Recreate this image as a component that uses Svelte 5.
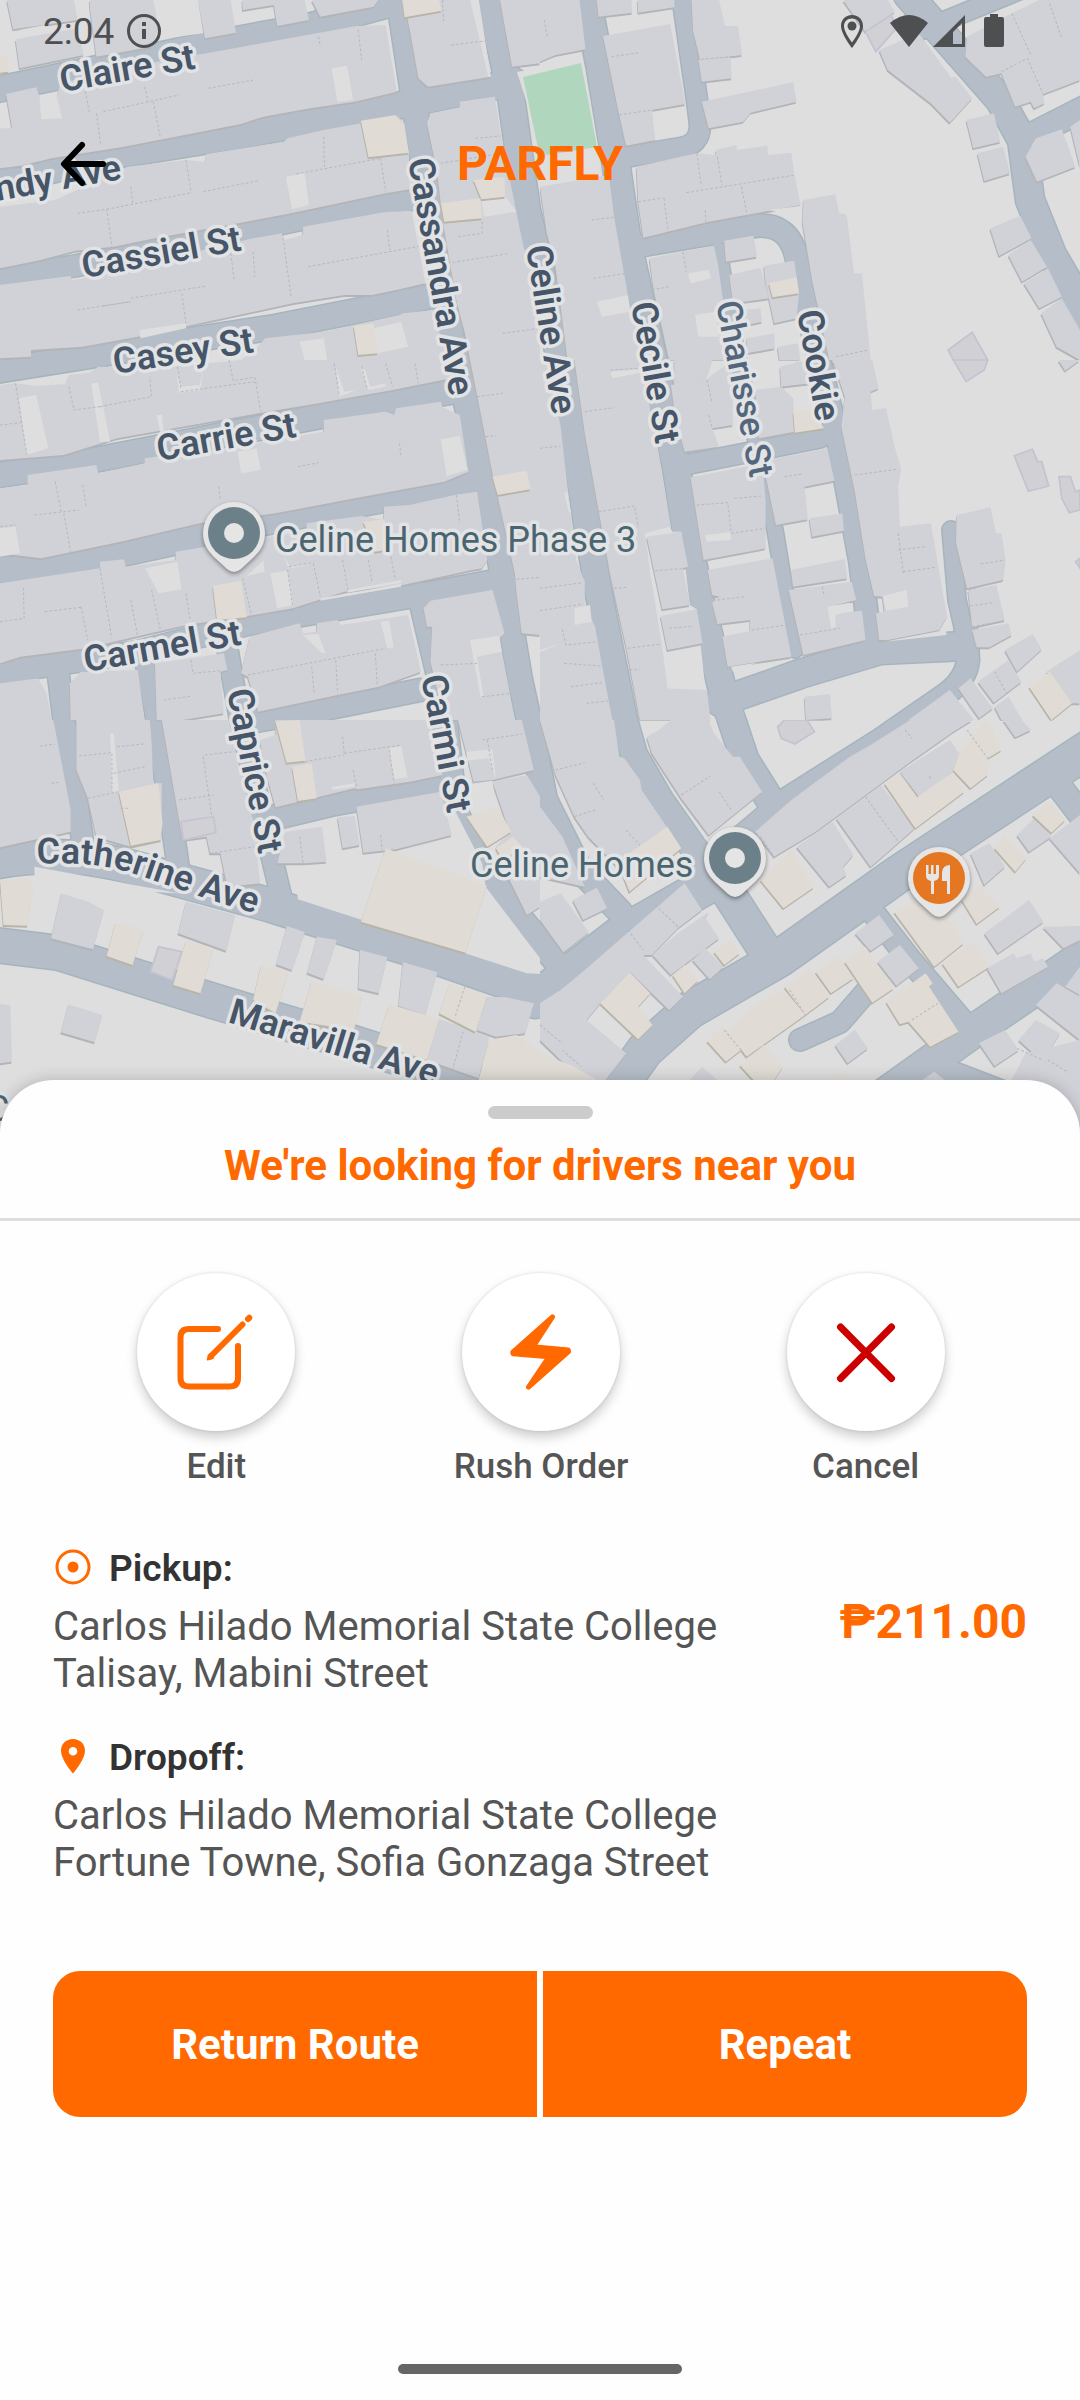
<script>
  // Street centre lines: [path, width]
  const roads = [
    ['M-5 90L100 68L207 45L310 26L405 0', 25],
    ['M-5 184L103 157L241 135L396 106L515 82', 26],
    ['M-5 278L75 266L241 232L380 203L410 200', 21],
    ['M-5 371L140 348L275 327L427 297', 24],
    ['M-5 476L100 459L300 420L455 391', 24],
    ['M-5 571L124 553L276 520L448 487L480 480', 25],
    ['M-5 673L138 652L248 624L403 598L500 580', 22],
    ['M250 722L330 708L420 690', 22],
    ['M255 822L330 804L440 784', 24],
    ['M398 -5L414 100L425 180L448 320L472 430L500 560L520 680L531 730L545 800L580 870L620 912', 24],
    ['M489 -5L510 90L527 210L556 340L573 430L588 530L600 600L624 720L634 755L660 800L695 850L720 885', 26],
    ['M586 -5L600 66L614 150L627 240L640 300L662 400L676 465L686 530L700 600L725 700L745 760L770 800', 27],
    ['M682 -5L697 100L700 125Q700 145 680 148L620 158', 20],
    ['M632 247L755 226Q790 222 797 260L805 300L838 440L860 560L870 640', 22],
    ['M719 250L730 320L775 530L795 650', 15],
    ['M685 465L820 438', 19],
    ['M720 702L800 674L880 650L965 646', 28],
    ['M951 530L957 600L966 640', 17],
    ['M966 630L968 660Q966 680 945 695L880 740L785 800L735 842', 22],
    ['M908 -5L1000 100L1022 140L1030 200L1052 255L1090 320', 28],
    ['M1022 140L1085 108', 24],
    ['M922 30L1025 -12', 18],
    ['M1090 748L900 873L780 958L690 1010L645 1050L620 1085', 36],
    ['M720 880L770 958', 32],
    ['M720 878L620 935L535 1000', 36],
    ['M-5 862Q60 850 120 864L270 905L420 952L530 990L570 990', 33],
    ['M-5 945L60 953L210 1000L350 1042L500 1090', 34],
    ['M58 672L64 720L84 850', 21],
    ['M146 662L156 715L178 865', 21],
    ['M228 652L240 720L270 850L282 900', 20],
    ['M420 595L440 680L455 810L475 855L515 912L560 966', 24],
    ['M1085 955L975 1030L880 1098', 32],
    ['M875 915L910 960L970 1030', 22],
    ['M940 1068L1010 1095', 22],
    ['M800 1040L840 1022L866 992', 21],
    ['M1062 790L1085 820', 24]
  ];

  // Map tiles; every tile is 1568 units wide and covers half of the map's width.
  const tiles = [
    {
      x: 0, y: 0,
      b: ['20,0 215,0 225,60 38,88', '45,118 225,85 243,165 57,205', '260,0 445,0 460,80 440,140 280,170 262,30', '575,0 670,0 685,98 595,115', '703,0 885,0 897,60 805,78 795,15 705,30', '905,0 1098,0 1085,20 930,50',
        '480,180 600,160 760,130 1035,78 1120,75 1152,275 1030,305 900,325 765,350 700,372 360,440 150,475 60,497 0,505 0,385 35,385 18,282 105,262 115,290 165,290 175,250',
        '1172,0 1390,0 1425,230 1243,260 1215,235 1190,90', '1250,340 1335,322 1335,305 1437,290 1455,410 1500,640 1520,740 1568,900 1568,1080 1365,1080 1350,1000 1325,900 1285,660 1270,520 1240,370', '1452,0 1568,0 1568,190 1487,200',
        '370,500 540,480 595,485 600,462 825,425 835,415 940,390 1050,370 1150,345 1175,370 1187,460 1190,568 1120,580 845,640 700,668 450,715 330,740 220,752 118,780 0,805 0,620 160,600',
        '0,855 205,828 210,840 230,838 735,715 820,700 825,720 880,705 880,680 1115,637 1195,632 1235,850 1150,870 1080,885 1000,885 850,910 580,970 400,1010 240,1040 90,1050 90,1070 0,1075',
        '770,1015 940,995 1160,945 1170,940 1260,930 1295,1080 700,1080 740,1050'],
      l: ['488,0 575,0 590,100 505,112', '55,90 130,75 135,100 62,112', '115,290 165,290 180,355 120,358', '963,205 1008,197 1025,300 980,305', '1398,600 1470,592 1500,635 1405,650', '830,530 885,520 897,615 848,628', '1365,0 1390,0 1425,230 1418,230', '870,1025 940,1015 950,1080 885,1080', '1085,985 1165,965 1185,1040 1097,1060', '405,990 540,970 540,985 408,1015'],
      t: ['1168,0 1275,0 1282,32 1175,52', '0,165 20,165 26,215 0,218', '1375,540 1465,530 1467,590 1398,598', '1280,610 1395,595 1400,655 1290,665', '1048,362 1145,346 1172,372 1187,458 1070,472', '1027,978 1085,970 1097,1060 1040,1065'],
      s: ['925,110 930,140', '1040,90 1050,180', '245,260 260,340', '445,305 465,410', '280,340 292,430', '420,260 430,305', '300,335 520,285', '225,640 310,628 325,740', '310,628 555,578', '540,480 555,578', '940,410 942,500', '860,522 1105,475', '1105,475 1120,575', '380,560 385,610', '590,575 750,542', '820,700 845,890', '895,800 1235,735', '1125,690 1132,750', '225,930 380,905', '380,895 600,858', '528,880 540,970', '670,760 680,840', '735,755 740,830', '1310,135 1430,120', '1280,490 1455,460', '1380,415 1455,408', '1300,790 1480,760', '1330,710 1400,700 1400,665', '1460,1000 1568,985', '605,265 735,240', '300,918 380,905', '1285,0 1288,70']
    },
    {
      x: 540, y: 0,
      b: ['0,0 115,0 132,148 45,165 0,185', '165,0 265,0 268,38 170,50', '283,0 390,0 390,22 285,38', '183,108 378,72 422,312 325,330 335,420 250,437 230,345', '440,0 520,0 537,78 575,78 587,165 465,180 445,95', '460,180 553,170 557,235 470,245', '470,305 735,247 745,305 612,338 590,365 490,385',
        '280,500 455,460 510,465 510,450 570,435 572,450 660,437 662,465 730,458 738,520 757,615 490,665 300,713 285,605', '765,600 858,583 868,640 890,643 912,820 935,820 960,1080 840,1080 790,840 762,665',
        '0,560 200,525 215,650 255,885 265,950 340,1080 80,1080 45,800 20,700', '318,775 505,737 517,795 530,890 545,1000 580,1080 375,1080 330,870', '535,722 620,707 630,770 540,785', '550,825 640,803 665,895 560,910', '650,797 738,782 752,880 745,955 680,970 655,850', '590,930 640,925 645,965 600,975', '600,1015 680,1000 682,1045 600,1060', '690,1040 750,1030 755,1080 695,1080',
        '880,0 1010,0 1030,35 945,95', '985,150 1100,100 1195,235 1205,228 1255,295 1190,368 1135,310 1010,210', '1370,40 1450,0 1568,0 1568,240 1460,283 1465,310 1435,325 1425,305 1380,320 1340,220 1295,230 1235,170 1240,110', '1238,360 1318,340 1337,425 1258,445', '1270,460 1345,440 1365,520 1290,543', '1410,470 1440,415 1515,388 1555,500 1443,545', '1540,380 1568,360 1568,500', '1307,685 1395,647 1427,715 1333,768', '1360,765 1425,720 1472,800 1400,845', '1405,850 1475,805 1515,890 1450,925', '1455,940 1515,895 1568,990 1568,1080 1500,1040'],
      l: ['165,905 255,885 262,935 180,950', '430,820 490,810 497,835 437,850', '450,945 510,935 520,1010 460,1010', '630,735 680,735 710,782 640,800 630,770', '665,630 755,618 760,670 700,640'],
      t: ['665,850 745,832 752,880 675,892'],
      o: ['945,95 1020,45 1035,85 975,155', '1185,1050 1255,997 1300,1080 1200,1080'],
      s: ['208,170 290,158', '230,345 325,330', '455,460 468,555', '425,578 740,525', '515,470 528,555', '360,595 372,695', '585,560 600,640', '480,630 482,670', '285,605 358,593', '150,660 215,652', '155,835 250,820', '415,755 425,815', '325,870 375,860', '1480,10 1515,115', '1370,40 1425,165', '1340,215 1415,175 1460,280', '440,180 560,170', '860,1070 955,1050', '12,60 22,115']
    },
    {
      x: 0, y: 360,
      b: ['0,75 45,70 110,78 190,72 200,45 260,38 285,20 500,20 700,0 1280,0 1310,55 1140,90 925,130 750,160 340,235 185,285 0,300',
        '80,345 280,315 285,340 420,310 420,295 690,260 940,215 940,180 1120,155 1145,165 1150,145 1280,125 1285,142 1335,165 1360,335 1290,365 1030,415 800,460 580,490 350,545 120,595 0,580 0,385 80,375',
        '0,670 290,625 290,605 360,598 365,620 510,600 510,575 780,530 890,515 890,490 1050,468 1115,480 1115,440 1190,435 1320,405 1385,395 1415,600 1400,625 1370,630 1170,675 1000,695 850,745 720,768 540,795 250,865 60,890 0,910',
        '0,970 110,955 135,1000 150,1080 0,1080', '235,935 400,930 420,1080 205,1080 203,970', '450,910 650,880 660,930 640,935 650,1060 530,1080 455,1080', '725,830 870,790 880,820 920,815 920,790 980,780 990,795 1185,765 1222,935 1100,980 980,1005 750,1055 720,950 700,940', '1230,745 1250,722 1430,690 1465,820 1450,835 1495,1080 1290,1080 1250,905 1255,800 1240,800', '1365,0 1568,0 1568,825 1515,820 1500,700 1495,640 1430,340'],
      l: ['55,115 105,105 140,265 78,285', '265,70 285,68 320,245 290,245', '1280,238 1335,228 1358,330 1297,348', '690,275 745,265 757,330 700,340', '0,505 45,500 58,580 0,590', '422,625 515,605 527,688 460,700', '785,640 835,632 852,735 805,745', '1365,840 1450,828 1457,875 1385,890 1404,1010 1395,1010', '880,825 925,822 945,880 935,880', '1105,785 1130,782 1143,862 1125,865', '512,30 525,80 580,75 590,30 582,90 520,98', '975,20 1000,95 1035,90 985,110', '1045,20 1060,30 1075,80 1120,70 1120,80 1070,90', '455,165 465,215 475,215 470,165', '1010,690 1165,660 1165,668 1010,698', '930,715 1165,672 1165,680 930,722', '735,630 765,600 768,635 715,648', '825,590 835,620 915,610 845,625'],
      t: ['618,678 700,662 717,772 630,780', '1055,485 1117,478 1120,570 1090,575', '1430,350 1530,332 1540,388 1445,405'],
      s: ['45,70 78,285', '200,80 215,150 290,140', '290,140 440,110 435,50', '515,20 525,85', '525,95 740,65', '665,0 677,62 740,52', '740,52 757,155', '0,195 60,188', '160,365 178,455', '100,465 230,450', '240,375 250,440', '185,460 205,575', '290,625 325,835', '380,720 400,830', '235,740 255,840', '440,690 468,820', '540,700 552,780', '0,785 70,775 68,680', '130,755 235,742', '705,655 730,765', '835,630 850,740', '910,610 930,710', '995,600 1010,690', '1070,600 1080,665', '1135,590 1148,660', '1325,405 1335,490', '720,945 1120,865', '975,900 980,1000', '1090,880 1095,975', '905,920 912,1000', '475,1020 560,1008', '555,900 560,940 640,932', '1280,915 1385,910', '1400,1010 1490,1000', '1385,110 1460,100', '1410,230 1440,227', '1500,658 1568,652', '0,500 45,495', '1160,250 1165,290', '865,320 925,308', '840,620 910,608', '635,380 640,420', '970,10 985,105', '1050,20 1065,85', '1120,10 1140,80', '1205,10 1215,70']
    },
    {
      x: 540, y: 360,
      b: ['100,0 300,0 320,150 345,280 380,500 320,530 350,750 355,860 370,985 485,990 495,1080 290,1080 250,860 205,650 170,450 130,220', '0,0 20,0 60,200 80,380 105,600 130,665 130,735 160,800 180,915 210,1080 0,1080',
        '380,75 480,60 560,0 560,195 500,205 520,260 420,275 395,180', '390,0 500,0 480,60 390,80', '625,90 700,80 735,115 740,215 635,235', '697,20 770,0 785,70 700,80',
        '850,0 965,0 983,85 960,95 965,150 1005,145 1030,260 1048,325 1040,380 1045,500 1135,490 1157,620 1182,770 1160,810 1010,840 985,840 975,760 1000,755 995,710 970,708 945,595 915,400 875,200 885,110',
        '437,352 500,340 645,310 655,420 655,565 475,600', '655,345 665,300 835,265 855,362 768,380 778,478 685,495', '782,475 878,460 882,512 790,530', '487,630 675,595 730,890 545,920 530,830 610,812 610,780 515,792 500,730 520,710 500,705', '728,630 885,597 892,655 735,680', '722,690 905,665 918,720 860,735 860,760 935,752 945,840 765,885',
        '1210,465 1308,442 1325,520 1340,520 1352,600 1345,660 1240,685 1208,550', '1243,690 1325,675 1350,780 1255,802', '1255,810 1360,790 1370,825 1305,862 1268,862', '1350,870 1430,822 1457,868 1385,935', '1272,965 1360,900 1398,965 1318,1028', '1215,985 1250,955 1315,1045 1275,1075', '1070,1080 1190,990 1260,1080', '1320,1040 1360,1010 1400,1080 1340,1080', '1470,935 1568,870 1568,1030 1545,1030', '768,1010 842,1002 848,1075 772,1080', '1505,0 1568,0 1525,32'],
      l: ['305,520 378,500 384,515 410,515 435,735 455,748 480,985 378,985 355,860 320,640', '480,525 552,517 555,540 485,545', '995,708 1065,690 1070,740 1005,752', '835,740 900,728 905,752 858,765 858,800 845,805', '70,400 80,395 92,470 82,450', '100,745 145,735 150,785 100,795', '0,870 60,850 0,877', '555,920 630,908 560,935', '205,35 290,28 290,38 210,55', '1000,845 1165,812 1180,800 1180,825'],
      b2: ['310,530 410,515 430,620 415,625 435,735 355,748', '350,768 455,748 472,850 370,870'],
      t: ['735,155 790,145 825,205 740,218', '1420,980 1480,935 1545,1030 1485,1080'],
      o: ['1377,287 1430,268 1445,305 1457,305 1477,378 1418,394', '1507,350 1540,350 1555,395 1568,390 1568,450 1537,458 1515,415', '1200,0 1300,0 1290,30 1237,65', '1555,605 1568,595 1568,625'],
      s: ['170,455 275,438 285,500', '205,30 285,25', '130,155 215,143', '0,265 60,258', '485,60 500,130', '490,165 500,205', '455,435 545,428 555,515', '565,415 645,408', '655,360 680,490', '710,350 760,342', '555,520 655,505', '915,345 1035,328', '1040,520 1055,640', '1040,570 1120,560', '1055,635 1150,622', '335,632 420,625', '375,805 445,798', '515,720 595,710', '615,810 715,795', '755,825 870,805', '820,680 825,710', '1280,612 1350,600', '1250,738 1320,728', '1320,935 1355,1000', '0,685 125,668', '0,752 125,732', '65,808 75,855 165,845', '70,910 180,918', '215,685 250,682', '255,865 350,852', '90,980 180,968', '135,1030 205,1022', '260,930 290,928', '1245,690 1345,660', '1255,800 1350,782']
    },
    {
      x: 0, y: 720,
      l: ['845,340 1310,250 1400,430 1410,500 1568,715 1568,762 1530,760 865,538', '555,365 620,340 660,500 650,460 562,430', '100,440 520,520 100,500'],
      b: ['0,0 155,0 205,270 205,335 0,382', '222,0 435,0 440,65 445,190 470,190 468,360 380,380 280,350 255,235 222,150', '470,0 660,0 735,300 755,490 660,500 640,400 610,400 600,350 530,360', '755,60 800,45 800,0 1250,0 1285,165 1190,185 1040,208 1030,205 800,262 770,150', '1035,260 1280,215 1312,345 1150,388 1055,398', '980,292 1030,288 1045,375 995,385', '830,335 935,320 948,425 885,430 805,430', '1330,0 1515,0 1550,150 1430,180 1375,185', '1430,185 1530,165 1568,230 1568,560 1530,585 1480,480 1440,380 1480,335',
        '178,520 255,545 302,570 270,688 148,655', '540,545 683,585 657,692 517,640', '833,618 885,637 848,750 802,733', '920,650 978,660 940,777 892,758', '1045,690 1125,712 1100,820 1040,805', '1170,727 1270,757 1235,885 1157,858', '1275,897 1420,950 1390,1075 1240,1020', '1470,832 1550,850 1525,940 1440,950 1385,930 1415,830', '198,853 297,885 275,967 177,937', '0,852 30,855 35,1025 0,1030'],
      l2: ['1130,85 1165,78 1183,172 1145,178', '320,40 330,40 345,215 325,215', '1375,190 1430,182 1440,260 1400,275', '1355,95 1430,88 1440,175 1418,115 1355,122', '965,200 1030,190 1030,200 965,210'],
      t: ['345,215 460,190 472,310 465,360 380,377', '800,5 870,0 887,122 832,128', '848,140 905,130 920,235 865,243', '1120,385 1413,497 1352,698 1048,605', '1355,290 1445,262 1485,335 1415,380', '1440,385 1490,350 1520,385 1460,420', '0,480 80,475 97,500 80,617 10,615', '335,607 417,630 385,735 310,708', '540,660 620,685 582,820 503,795', '758,735 838,757 800,880 735,840', '905,783 1052,828 1028,930 870,905', '1130,852 1275,897 1240,1020 1093,972', '1305,790 1415,825 1380,935 1275,880', '1420,960 1500,945 1568,1000 1568,1130 1390,1080'],
      o: ['460,680 528,695 500,780 437,755', '525,305 620,290 627,338 533,360'],
      s: ['115,78 160,72', '230,108 325,98 325,215', '340,80 420,72', '255,235 345,215', '520,240 620,225', '590,110 615,290', '595,105 680,95', '1000,100 1165,75', '995,50 1000,105', '885,125 1000,105', '1025,150 1035,200', '1130,90 1145,190', '1400,60 1515,42', '1415,60 1430,150', '1350,800 1320,895', '1345,935 1315,1045', '870,350 880,430', '1105,345 1110,390', '610,400 740,380', '330,160 420,140', '150,190 170,187', '350,265 375,265']
    },
    {
      x: 540, y: 720,
      b: ['0,0 215,0 230,110 245,115 290,180 295,210 410,385 260,515 235,450 140,350 100,290 45,165', '310,50 345,30 380,0 490,0 505,40 560,110 580,110 645,215 490,345 410,235 325,100', '0,260 65,350 130,500 0,470', '0,545 60,520 142,637 68,697 0,600', '95,540 165,503 195,565 125,600',
        '625,335 730,240 900,110 960,75 1075,0 1255,0 1200,35 1070,130 860,290 800,335 680,410', '745,380 850,305 910,405 880,440 890,465 840,500', '860,295 990,195 1088,325 1000,405 960,440', '1045,155 1190,60 1235,125 1145,200 1100,230', '1345,0 1400,0 1425,30 1380,52', '1385,345 1440,290 1485,350 1420,395', '1480,355 1568,285 1568,460', '1250,400 1305,370 1350,440 1290,495', '1290,640 1420,540 1462,605 1330,700', '1460,620 1568,618 1568,660 1520,685', '1298,745 1375,700 1385,715 1425,700 1435,725 1460,715 1475,740 1340,820',
        '915,640 985,585 1027,645 960,693', '980,725 1045,675 1100,745 1035,797', '857,975 915,930 952,985 893,1030', '1275,970 1350,930 1390,990 1320,1038', '1390,960 1440,900 1510,940 1460,1025', '1440,855 1500,790 1568,830 1568,960', '1370,1080 1410,1000 1568,960 1568,1300 1500,1140', '1525,800 1568,740 1568,825', '130,750 420,490 470,570 400,625 325,705 300,705 415,830 375,870 260,755 175,850', '327,705 400,640 490,575 480,595 520,655 380,765', '443,720 480,685 533,740 493,778', '0,850 60,810 130,750 260,757 175,850 135,900 250,1000 190,1080 120,1080 0,960', '435,1080 470,1040 515,1080', '1110,1080 1145,1055 1175,1080'],
      t: ['260,400 370,320 410,385 260,515 235,450', '640,480 730,388 795,502 707,565', '1000,190 1045,160 1095,232 1200,155 1232,215 1090,325', '1220,90 1290,5 1310,15 1340,90 1300,115 1300,165 1250,205 1200,150', '1430,285 1480,245 1525,300 1485,338', '1320,385 1350,345 1412,415 1380,455', '1225,540 1270,500 1335,560 1268,612', '1028,575 1150,520 1230,670 1145,740', '1168,730 1260,668 1305,740 1215,800', '885,725 945,680 1027,805 965,848', '800,755 865,705 910,775 845,820', '710,800 785,748 840,830 770,885', '540,930 655,835 710,810 770,885 600,1010', '485,963 530,920 590,985 540,1025', '580,1035 650,975 705,1040 680,1080 620,1080', '1005,845 1100,775 1120,760 1140,790 1130,800 1215,935 1133,980 1070,905 1045,913', '505,695 555,660 580,700 535,735', '385,765 420,735 460,780 420,820', '175,850 260,757 320,820 285,860 327,915 285,958', '0,1000 100,1040 165,1080 0,1080', '850,1080 880,1058 895,1080'],
      o: ['690,20 710,0 775,0 797,35 740,72 700,55'],
      s: ['45,150 130,128', '155,190 185,240', '100,290 160,270', '250,330 290,375', '410,225 495,168', '520,215 555,270', '945,230 1040,365', '640,350 680,410', '1240,30 1300,115', '255,630 300,690', '335,555 400,620', '725,810 770,885', '1080,900 1155,850', '535,930 600,1010', '1385,985 1460,1020', '1475,1020 1530,1055', '0,915 65,970', '65,990 120,1040', '1060,30 1080,55', '1130,170 1135,175']
    }
  ];
  const layers = [['l', 'land'], ['b', 'building'], ['l2', 'land'], ['b2', 'building'], ['t', 'shop']];
  // The land patches of most tiles are yards cut out of the blocks, so they go above them.
  const order = (tile) => (tile.l2 ? layers : [layers[1], layers[0], layers[3], layers[4]]);

  const streets = [
    { t: 'Claire St', x: 62, y: 92, r: -10 },
    { t: 'ndy Ave', x: -3, y: 201, r: -10 },
    { t: 'Cassiel St', x: 84, y: 278, r: -10 },
    { t: 'Casey St', x: 115, y: 374, r: -9 },
    { t: 'Carrie St', x: 159, y: 461, r: -10 },
    { t: 'Carmel St', x: 86, y: 672, r: -10 },
    { t: 'Cassandra Ave', x: 408, y: 160, r: 80 },
    { t: 'Celine Ave', x: 526, y: 247, r: 81 },
    { t: 'Cecile St', x: 631, y: 304, r: 80 },
    { t: 'Charisse St', x: 716, y: 303, r: 79, light: true },
    { t: 'Cookie', x: 797, y: 312, r: 80 },
    { t: 'Caprice St', x: 227, y: 691, r: 79 },
    { t: 'Carmi St', x: 421, y: 677, r: 79 }
  ];
  const pins = [
    { x: 234, y: 533, kind: 'place' },
    { x: 735, y: 858, kind: 'place' },
    { x: 939, y: 878, kind: 'food' }
  ];
  const stops = [
    { label: 'Pickup:', icon: 'ring', lines: ['Carlos Hilado Memorial State College', 'Talisay, Mabini Street'] },
    { label: 'Dropoff:', icon: 'pin', lines: ['Carlos Hilado Memorial State College', 'Fortune Towne, Sofia Gonzaga Street'] }
  ];
</script>

<div class="page">
  <section class="hero">
    <svg class="map" viewBox="0 0 1080 1136" preserveAspectRatio="xMidYMin slice" role="img" aria-label="Street map">
      <clipPath id="tile"><rect width="1570" height="1082" /></clipPath>
      <clipPath id="tall-tile"><rect width="1570" height="1260" /></clipPath>
      <rect class="land" width="1080" height="1136" />
      <g class="road-edge">
        {#each roads as [d, w]}<path {d} stroke-width={w + 3} />{/each}
      </g>
      <g class="road">
        {#each roads as [d, w]}<path {d} stroke-width={w} />{/each}
      </g>
      {#each tiles as tile}
        <g transform="translate({tile.x} {tile.y}) scale(0.34439 0.33333)" clip-path={tile.y === 720 ? 'url(#tall-tile)' : 'url(#tile)'}>
          {#each order(tile) as [key, cls]}
            {#if cls !== 'land'}
              {#each tile[key] ?? [] as points}<polygon class="{cls}-side" {points} transform="translate(-2 6)" />{/each}
            {/if}
            {#each tile[key] ?? [] as points}<polygon class={cls} {points} />{/each}
          {/each}
          {#each tile.o ?? [] as points}<polygon class="outlined" {points} />{/each}
          {#each tile.s ?? [] as points}<polyline class="seam" {points} />{/each}
        </g>
      {/each}
      <polygon class="park-rim" points="517,72 581,59 598,150 545,160" />
      <polygon class="park" points="523,77 581,63 597,147 547,155 538,148" />

      {#each streets as s}
        <text class="street" class:light={s.light} transform="translate({s.x} {s.y}) rotate({s.r})">{s.t}</text>
      {/each}
      <path id="catherine" fill="none" d="M37 864C70 862 105 864 135 874S220 905 290 923" />
      <text class="street"><textPath href="#catherine">Catherine Ave</textPath></text>
      <text class="street" transform="translate(227 1022) rotate(17)">Maravilla Ave</text>
      <text class="poi" x="275" y="552">Celine Homes Phase 3</text>
      <text class="poi" x="470" y="877">Celine Homes</text>
      <text class="poi" x="-14" y="1121">C</text>

      {#each pins as p}
        <g class="pin" transform="translate({p.x} {p.y})">
          <path class="pin-body" d="M-31 0A31 31 0 1 1 31 0C31 10 27 17 20 24L7 36Q0 42-7 36L-20 24C-27 17-31 10-31 0Z" />
          <circle class={p.kind} r="26" />
          {#if p.kind === 'place'}
            <circle class="pin-ink" r="10" />
          {:else}
            <path class="pin-ink" d="M-13-13h2.500v9h2.500v-9h2.500v9h2.500v-9H0V-2Q0 2-5 3V16H-8V3Q-13 2-13-2ZM11-13V16H8V3H3V-6Q4-13 11-13Z" />
          {/if}
        </g>
      {/each}
    </svg>

    <header class="top">
      <div class="status">
        <span>2:04</span>
        <svg class="info" viewBox="0 0 36 36" aria-hidden="true">
          <circle cx="18" cy="18" r="15.500" fill="none" stroke="currentColor" stroke-width="3" />
          <path d="M16 16h4v10h-4zM16 9h4v4h-4z" fill="currentColor" />
        </svg>
        <svg class="system" viewBox="0 0 172 36" aria-hidden="true" fill="currentColor">
          <path fill-rule="evenodd" d="M14 2C7 2 3 7 3 13c0 8 11 22 11 22s11-14 11-22C25 7 21 2 14 2Zm0 3.500c5 0 8 3.500 8 7.500 0 5-5 12.500-8 16.500-3-4-8-11.500-8-16.500 0-4 3-7.500 8-7.500Z" />
          <circle cx="14" cy="13" r="4.500" />
          <path d="M52 10Q71-6 90 10L71 34Z" />
          <path fill-rule="evenodd" d="M127 2V34H95ZM124 10L115 19V31H124Z" />
          <path d="M152 1h8v3h4q2 0 2 2v26q0 2-2 2h-16q-2 0-2-2V6q0-2 2-2h4Z" />
        </svg>
      </div>
      <div class="bar">
        <button class="back" aria-label="Back">
          <svg viewBox="0 0 48 48" aria-hidden="true"><path d="M24 5L6 24L24 43M7 24H45" /></svg>
        </button>
        <h1>PARFLY</h1>
        <span></span>
      </div>
    </header>
  </section>

  <main class="sheet">
    <div class="handle"></div>
    <h2>We're looking for drivers near you</h2>

    <nav class="actions">
      <button class="action">
        <svg viewBox="0 0 158 158" aria-hidden="true">
          <path class="line" d="M81 56H52Q43.500 56 43.500 64.500V105Q43.500 113.500 52 113.500H92.500Q101 113.500 101 105V73" />
          <path class="line" d="M105.500 51.500L75 82" />
          <path class="fill" d="M72.500 80L77.500 85L75 86.500L70.500 87.500Q69.500 87.500 69.700 86.500L70.700 82Z" />
          <path class="line" d="M111 46L112.300 44.800" stroke-width="7" />
        </svg>
        <span>Edit</span>
      </button>
      <button class="action">
        <svg viewBox="0 0 158 158" aria-hidden="true">
          <path class="bolt" d="M90.500 43.800L50.800 79L51 80.800L87 83.700L66.500 114.200L106.500 78.700L106.300 77L71 73.800Z" />
        </svg>
        <span>Rush Order</span>
      </button>
      <button class="action">
        <svg viewBox="0 0 158 158" aria-hidden="true"><path class="cross" d="M53.500 54L104.500 105.500M104.500 54L53.500 105.500" /></svg>
        <span>Cancel</span>
      </button>
    </nav>

    <section class="trip">
      <div class="stops">
        {#each stops as stop}
          <div class="stop">
            <h3>
              <svg viewBox="0 0 40 40" aria-hidden="true">
                {#if stop.icon === 'ring'}
                  <circle cx="20" cy="18" r="16" fill="none" stroke="#ff6900" stroke-width="3" /><circle cx="20" cy="18" r="5.500" fill="#ff6900" />
                {:else}
                  <path fill="#ff6900" fill-rule="evenodd" d="M20 1C13 1 8 6 8 12.500C8 22 20 35.500 20 35.500S32 22 32 12.500C32 6 27 1 20 1Zm0 8a4.300 4.300 0 1 1 0 8.600a4.300 4.300 0 0 1 0-8.600Z" />
                {/if}
              </svg>
              {stop.label}
            </h3>
            <p>{#each stop.lines as line}<span>{line}</span>{/each}</p>
          </div>
        {/each}
      </div>
      <strong class="price">₱211.00</strong>
    </section>

    <div class="buttons">
      <button>Return Route</button>
      <button>Repeat</button>
    </div>
    <div class="home"></div>
  </main>
</div>

<style>
  :global(body) { margin: 0; background: #fefefe; }
  .page { display: flex; flex-direction: column; min-height: 100vh; font-family: Roboto, sans-serif; }
  button { border: 0; padding: 0; background: none; font: inherit; cursor: pointer; }
  h1, h2, h3, p { margin: 0; }

  .hero { display: grid; }
  .map, .top { grid-area: 1 / 1; }
  .map { display: block; width: 100%; }
  .land { fill: #dedede; }
  .building { fill: #d1d2d8; }
  .building-side { fill: #b3b4b8; }
  .shop { fill: #e0dcd5; }
  .shop-side { fill: #b9b4a8; }
  .outlined { fill: #d0d0d5; stroke: #c3c3d2; stroke-width: 5; }
  .seam { fill: none; stroke: #b7b8bd; stroke-width: 3; stroke-dasharray: 8 6; }
  .park { fill: #b0d7be; }
  .park-rim { fill: #dedede; }
  .road, .road-edge { fill: none; stroke: #b5bec8; stroke-linecap: round; stroke-linejoin: round; }
  .road-edge { stroke: #a6b4bd; }
  .street, .poi { paint-order: stroke; stroke: #e2e3e5; stroke-width: 7px; stroke-linejoin: round; }
  .street { font-size: 36px; font-weight: 600; fill: #465568; }
  .light { font-size: 35px; font-weight: 500; fill: #53667c; }
  .poi { font-size: 36px; fill: #4b6570; }
  .pin { filter: drop-shadow(0 2px 2px rgb(0 0 0 / 0.4)); }
  .pin-body, .pin-ink { fill: #e5e5e5; }
  .place { fill: #6c808a; }
  .food { fill: #e57723; }

  .top { display: flex; flex-direction: column; }
  .status { display: flex; align-items: center; gap: 12px; height: 62px; padding: 0 70px 0 43px; font-size: 37px; color: #4e4f51; }
  .info { width: 36px; height: 36px; }
  .system { width: 172px; height: 36px; margin-left: auto; }
  .bar { display: grid; grid-template-columns: 60px 1fr 60px; align-items: center; height: 80px; margin-top: 62px; padding: 0 54px; }
  .back { display: flex; }
  .back svg { width: 48px; height: 48px; margin-left: 4px; fill: none; stroke: #000; stroke-width: 6; stroke-linecap: round; stroke-linejoin: round; }
  h1 { font-size: 48px; line-height: 56px; font-weight: 700; text-align: center; color: #ff6900; }

  .sheet { position: relative; display: flex; flex: 1; flex-direction: column; margin-top: -56px; padding: 26px 0; border-radius: 54px 54px 0 0; background: #fefefe; box-shadow: 0 0 16px rgb(0 0 0 / 0.2); }
  .handle { width: 105px; height: 13px; margin: 0 auto; border-radius: 7px; background: #ccc; }
  h2 { padding: 21px 0 26px; border-bottom: 3px solid #ddd; font-size: 42px; line-height: 52px; font-weight: 700; text-align: center; color: #ff6900; }

  .actions { display: grid; grid-template-columns: repeat(3, 1fr); padding: 52px 52px 0 54px; }
  .action { display: flex; flex-direction: column; align-items: center; gap: 16px; font-size: 35px; line-height: 40px; font-weight: 500; color: #555; }
  .action svg { width: 158px; height: 158px; border-radius: 50%; background: #fff; box-shadow: 0 6px 12px rgb(0 0 0 / 0.2), 0 0 3px rgb(0 0 0 / 0.12); fill: none; stroke-linecap: round; stroke-linejoin: round; }
  .line { stroke: #ff6900; stroke-width: 6; }
  .fill { fill: #ff6900; }
  .bolt { fill: #ff6900; stroke: #ff6900; stroke-width: 5; }
  .cross { stroke: #c00; stroke-width: 7; }

  .trip { display: flex; justify-content: space-between; align-items: flex-start; padding: 56px 53px 0; }
  .stops { display: grid; gap: 35px; }
  .stop { display: grid; gap: 8px; }
  h3 { display: flex; align-items: center; gap: 16px; font-size: 37px; line-height: 52px; font-weight: 600; color: #333; }
  h3 svg { width: 40px; height: 40px; }
  p { font-size: 40px; line-height: 47px; color: #555; }
  p span { display: block; }
  .price { margin-top: 51px; font-size: 48px; line-height: 56px; font-weight: 700; color: #ff6900; }

  .buttons { display: grid; grid-template-columns: 1fr 1fr; gap: 6px; margin: 85px 53px 80px; overflow: hidden; border-radius: 27px; }
  .buttons button { height: 146px; background: #ff6900; font-size: 42px; font-weight: 700; color: #fff; }
  .home { width: 284px; height: 10px; margin: auto auto 0; border-radius: 5px; background: #666; }
</style>
